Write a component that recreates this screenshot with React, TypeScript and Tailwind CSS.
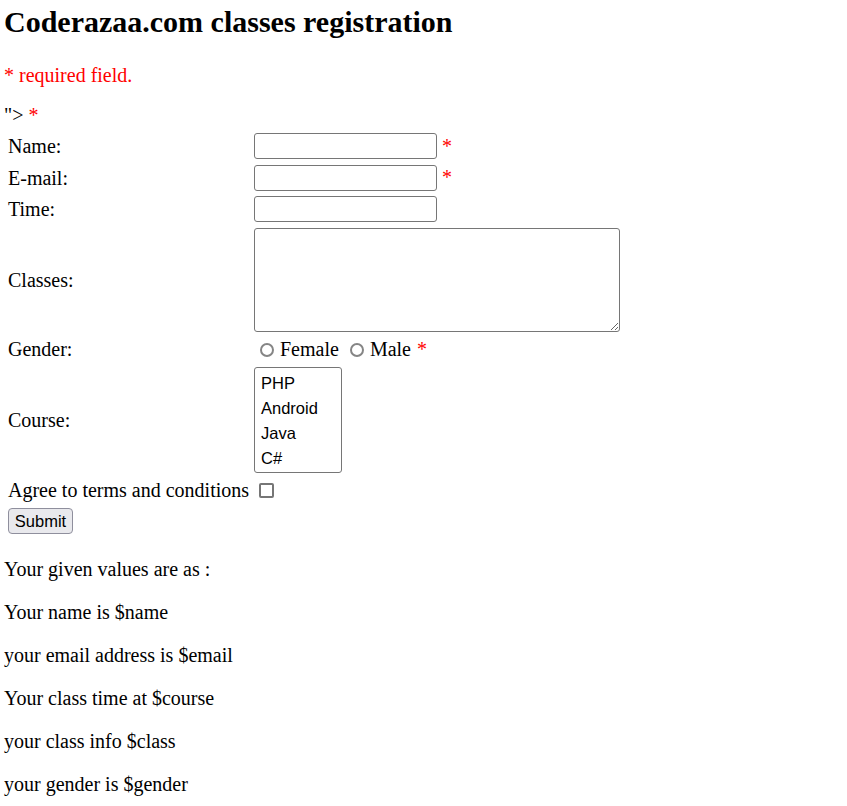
import React from 'react';

export default function App() {
  const results = [
    'Your given values are as :',
    'Your name is $name',
    'your email address is $email',
    'Your class time at $course',
    'your class info $class',
    'your gender is $gender',
  ];

  return (
    <div className="pl-[4px] font-['Liberation_Serif','Times_New_Roman',serif] text-[20px] leading-[23px] text-black bg-white min-h-screen">
      <h2 className="pt-[4px] text-[30px] leading-[35px] font-bold">Coderazaa.com classes registration</h2>
      <p className="mt-[25px] text-[#f00]">* required field.</p>

      <form className="mt-[17px]" onSubmit={(e) => e.preventDefault()}>
        <div>
          "&gt; <span className="text-[#f00]">*</span>
        </div>

        <div className="mt-[6px] ml-[4px] grid grid-cols-[246px_auto] gap-y-[5.5px] items-center justify-start">
          <label className="pt-[1px]">Name:</label>
          <div className="flex items-center">
            <input type="text" className="w-[183px] h-[26px] border border-[#767676] rounded-[3px] bg-white" />
            <span className="ml-[5px] text-[#f00]">*</span>
          </div>

          <label className="pt-[1px]">E-mail:</label>
          <div className="flex items-center">
            <input type="text" className="w-[183px] h-[26px] border border-[#767676] rounded-[3px] bg-white" />
            <span className="ml-[5px] text-[#f00]">*</span>
          </div>

          <label className="pt-[1px]">Time:</label>
          <div className="flex items-center">
            <input type="text" className="w-[183px] h-[26px] border border-[#767676] rounded-[3px] bg-white" />
          </div>

          <label className="pt-[2px]">Classes:</label>
          <div className="flex">
            <textarea className="w-[366px] h-[104px] border border-[#767676] rounded-[3px] bg-white" />
          </div>

          <label className="pt-[1px]">Gender:</label>
          <div className="flex items-center h-[24px] pt-[1px]">
            <input
              type="radio"
              name="gender"
              className="appearance-none shrink-0 ml-[6px] w-[14px] h-[14px] rounded-full border-2 border-[#858585] bg-white"
            />
            <span className="ml-[6px]">Female</span>
            <input
              type="radio"
              name="gender"
              className="appearance-none shrink-0 ml-[11px] w-[14px] h-[14px] rounded-full border-2 border-[#858585] bg-white"
            />
            <span className="ml-[6px]">Male</span>
            <span className="ml-[6px] text-[#f00]">*</span>
          </div>

          <label className="pt-[2px]">Course:</label>
          <div className="flex">
            <div
              role="listbox"
              className="w-[88px] h-[106px] border border-[#767676] rounded-[3px] bg-white pt-[3px] font-['Liberation_Sans',Arial,sans-serif] text-[16.5px]"
            >
              {['PHP', 'Android', 'Java', 'C#'].map((c) => (
                <div key={c} role="option" className="h-[25px] leading-[25px] pl-[6px]">
                  {c}
                </div>
              ))}
            </div>
          </div>

          <label className="pt-[1px]">Agree to terms and conditions</label>
          <div className="flex items-center h-[24px]">
            <input
              type="checkbox"
              className="appearance-none shrink-0 ml-[5px] w-[15px] h-[15px] border-2 border-[#767676] rounded-[2px] bg-white"
            />
          </div>

          <div>
            <button
              type="submit"
              className="w-[65px] h-[26px] bg-[#e9e9ed] border border-[#8f8f9d] rounded-[4px] font-['Liberation_Sans',Arial,sans-serif] text-[16.5px] leading-[24px] text-black"
            >
              Submit
            </button>
          </div>
          <div />
        </div>
      </form>

      <div className="mt-[24px]">
        {results.map((r) => (
          <p key={r} className="mb-[20px]">
            {r}
          </p>
        ))}
      </div>
    </div>
  );
}
